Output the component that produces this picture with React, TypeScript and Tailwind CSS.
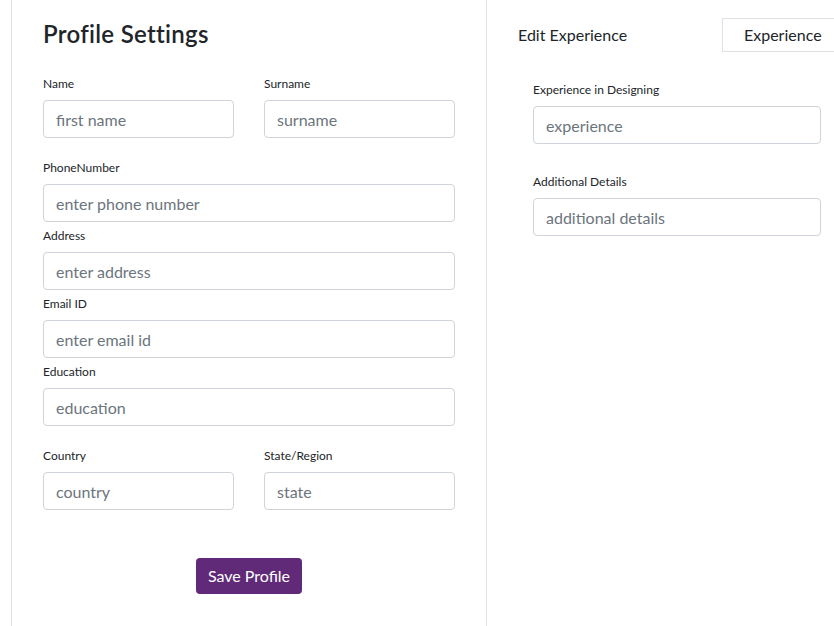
import React from "react";

const font = { fontFamily: 'Lato, "Noto Sans", sans-serif' };

function Field({ label, placeholder, className = "" }: { label: string; placeholder: string; className?: string }) {
  return (
    <div className={className}>
      <div className="h-[18px] text-[12px] leading-[18px] text-[#212529]">{label}</div>
      <input
        className="mt-[7px] block h-[38px] w-full rounded-[4px] border border-[#ced4da] bg-white px-[12px] text-[16px] text-[#495057] outline-none placeholder:text-[#6c757d]"
        placeholder={placeholder}
      />
    </div>
  );
}

export default function App() {
  return (
    <div className="h-[626px] w-[834px] overflow-hidden bg-white" style={font}>
      <div className="ml-[11px] flex h-full border-l border-[#dee2e6]">
        <div className="w-[475px] shrink-0 border-r border-[#dee2e6] px-[31px] pt-[19px]">
          <h1 className="text-[24px] font-semibold leading-[30px] tracking-[0.3px] text-[#212529]">Profile Settings</h1>
          <div className="mt-[26px] grid grid-cols-2 gap-x-[30px]">
            <Field label="Name" placeholder="first name" />
            <Field label="Surname" placeholder="surname" />
          </div>
          <Field className="mt-[21px]" label="PhoneNumber" placeholder="enter phone number" />
          <Field className="mt-[5px]" label="Address" placeholder="enter address" />
          <Field className="mt-[5px]" label="Email ID" placeholder="enter email id" />
          <Field className="mt-[5px]" label="Education" placeholder="education" />
          <div className="mt-[21px] grid grid-cols-2 gap-x-[30px]">
            <Field label="Country" placeholder="country" />
            <Field label="State/Region" placeholder="state" />
          </div>
          <div className="mt-[48px] flex justify-center">
            <button className="h-[36px] rounded-[4px] bg-[#612a78] px-[12px] text-[16px] text-white">Save Profile</button>
          </div>
        </div>
        <div className="min-w-0 flex-1 pl-[31px]">
          <div className="mt-[18px] flex h-[34px] items-center justify-between">
            <span className="text-[16px] leading-[24px] text-[#212529]">Edit Experience</span>
            <div className="flex h-[34px] w-[130px] shrink-0 items-center border border-[#dee2e6] pl-[21px] text-[16px] text-[#212529] -mr-[18px]">
              Experience
            </div>
          </div>
          <div className="w-[288px] ml-[15px]">
            <Field className="mt-[29px]" label="Experience in Designing" placeholder="experience" />
            <Field className="mt-[29px]" label="Additional Details" placeholder="additional details" />
          </div>
        </div>
      </div>
    </div>
  );
}
